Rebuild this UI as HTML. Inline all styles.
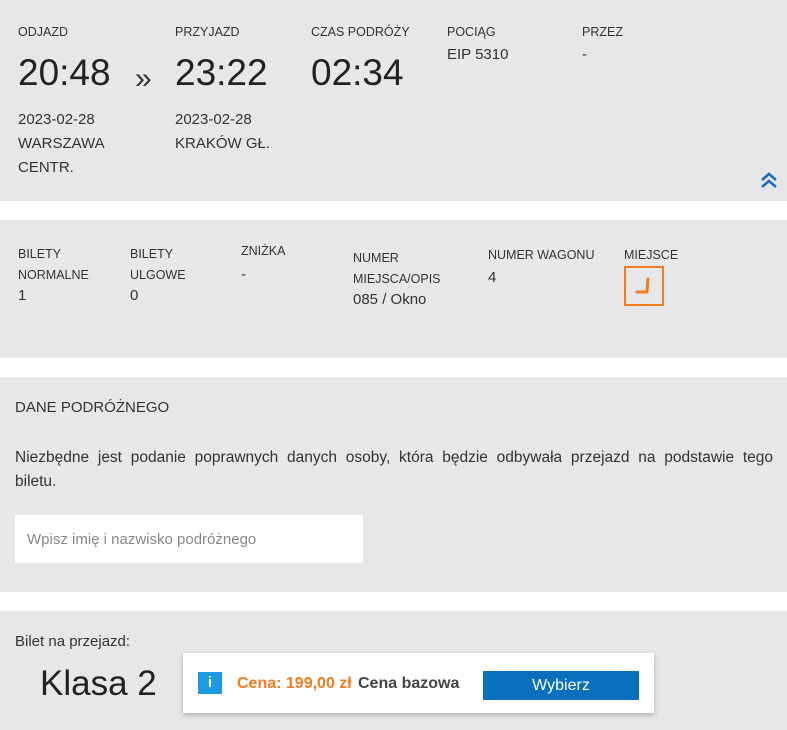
<!DOCTYPE html>
<html><head><meta charset="utf-8"><style>
body{margin:0;width:787px;height:730px;background:#fff;font-family:"Liberation Sans",sans-serif;color:#333;position:relative;overflow:hidden}
.s{position:absolute;left:0;width:787px;background:#e6e7e9}
.a{position:absolute;white-space:nowrap}
.l{font-size:12.5px;color:#333}
.v{font-size:15px;color:#333}
.big{font-size:37px;color:#222}
</style></head><body>
<div class="s" style="top:0;height:201px"></div>
<div class="s" style="top:220px;height:138px"></div>
<div class="s" style="top:377px;height:215px"></div>
<div class="s" style="top:611px;height:119px"></div>

<div class="a l" style="left:18px;top:25px">ODJAZD</div>
<div class="a big" style="left:18px;top:52px">20:48</div>
<div class="a v" style="left:18px;top:108px;line-height:24px">2023-02-28<br>WARSZAWA<br>CENTR.</div>
<div class="a" style="left:135px;top:62px;font-size:30px;color:#333">»</div>
<div class="a l" style="left:175px;top:25px">PRZYJAZD</div>
<div class="a big" style="left:175px;top:52px">23:22</div>
<div class="a v" style="left:175px;top:108px;line-height:24px">2023-02-28<br>KRAKÓW GŁ.</div>
<div class="a l" style="left:311px;top:25px">CZAS PODRÓŻY</div>
<div class="a big" style="left:311px;top:52px">02:34</div>
<div class="a l" style="left:447px;top:25px">POCIĄG</div>
<div class="a v" style="left:447px;top:46px">EIP 5310</div>
<div class="a l" style="left:582px;top:25px">PRZEZ</div>
<div class="a v" style="left:582px;top:46px">-</div>
<svg class="a" style="left:760px;top:171px" width="18" height="18" viewBox="0 0 18 18"><path d="M2 9 L9 3 L16 9 M2 16 L9 10 L16 16" fill="none" stroke="#1a6fc0" stroke-width="2.6"/></svg>

<div class="a l" style="left:18px;top:244px;line-height:21px">BILETY<br>NORMALNE</div>
<div class="a v" style="left:18px;top:287px">1</div>
<div class="a l" style="left:130px;top:244px;line-height:21px">BILETY<br>ULGOWE</div>
<div class="a v" style="left:130px;top:287px">0</div>
<div class="a l" style="left:241px;top:244px">ZNIŻKA</div>
<div class="a v" style="left:241px;top:266px">-</div>
<div class="a l" style="left:353px;top:248px;line-height:21px">NUMER<br>MIEJSCA/OPIS</div>
<div class="a v" style="left:353px;top:291px">085 / Okno</div>
<div class="a l" style="left:488px;top:248px">NUMER WAGONU</div>
<div class="a v" style="left:488px;top:269px">4</div>
<div class="a l" style="left:624px;top:248px">MIEJSCE</div>
<div class="a" style="left:624px;top:266px;width:40px;height:40px;border:2px solid #f47b20;box-sizing:border-box"></div>
<svg class="a" style="left:628px;top:270px" width="32" height="32" viewBox="0 0 32 32"><path d="M20 9 L19 21 M9 22 L19 22" stroke="#f47b20" stroke-width="3" stroke-linecap="round" fill="none"/></svg>

<div class="a" style="left:15px;top:399px;font-size:15px;color:#333">DANE PODRÓŻNEGO</div>
<div class="a" style="left:15px;top:446px;width:758px;white-space:nowrap;font-size:15.5px;line-height:24px;text-align:justify;text-align-last:justify">Niezbędne jest podanie poprawnych danych osoby, która będzie odbywała przejazd na podstawie tego</div>
<div class="a" style="left:15px;top:470px;font-size:15.5px;line-height:24px">biletu.</div>
<div class="a" style="left:15px;top:515px;width:348px;height:48px;background:#fff"></div>
<div class="a" style="left:27px;top:531px;font-size:15px;color:#888">Wpisz imię i nazwisko podróżnego</div>

<div class="a" style="left:15px;top:633px;font-size:15px">Bilet na przejazd:</div>
<div class="a" style="left:40px;top:664px;font-size:35px;color:#222">Klasa 2</div>
<div class="a" style="left:183px;top:653px;width:471px;height:60px;background:#fff;box-shadow:0 2px 5px rgba(0,0,0,.25)"></div>
<div class="a" style="left:198px;top:672px;width:24px;height:22px;background:#1e9be0;color:#fff;font-weight:bold;font-size:15px;text-align:center;line-height:22px">i</div>
<div class="a" style="left:237px;top:675px;font-size:16px;font-weight:bold;color:#f47b20">Cena: 199,00 zł</div>
<div class="a" style="left:358px;top:675px;font-size:16px;font-weight:bold;color:#444">Cena bazowa</div>
<div class="a" style="left:483px;top:671px;width:156px;height:29px;background:#0a6fbd;color:#fff;font-size:16px;text-align:center;line-height:29px">Wybierz</div>
</body></html>
